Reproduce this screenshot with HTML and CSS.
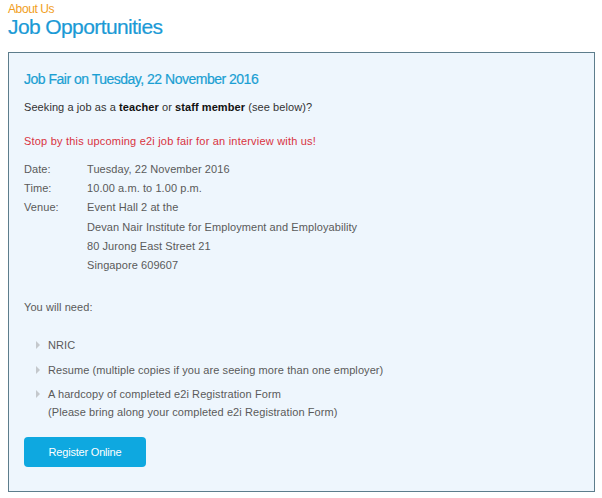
FILE: index.html
```html
<!DOCTYPE html>
<html lang="en">
  <head>
    <meta charset="UTF-8" />
    <meta name="viewport" content="width=device-width, initial-scale=1.0" />
    <title>Job Opportunities</title>
    <link rel="stylesheet" href="styles.css">
  </head>
  <body>
    <div class="page-head">
      <div class="crumb">About Us</div>
      <h1>Job Opportunities</h1>
    </div>

    <!-- Kotak info job fair -->
    <div class="fair-box">
      <h2>Job Fair on Tuesday, 22 November 2016</h2>
      <p class="intro">Seeking a job as a <b>teacher</b> or <b>staff member</b> (see below)?</p>
      <p class="alert">Stop by this upcoming e2i job fair for an interview with us!</p>

      <table class="details">
        <tr><td class="label">Date:</td><td>Tuesday, 22 November 2016</td></tr>
        <tr><td class="label">Time:</td><td>10.00 a.m. to 1.00 p.m.</td></tr>
        <tr>
          <td class="label">Venue:</td>
          <td>
            Event Hall 2 at the<br />
            Devan Nair Institute for Employment and Employability<br />
            80 Jurong East Street 21<br />
            Singapore 609607
          </td>
        </tr>
      </table>

      <p class="need">You will need:</p>
      <ul class="need-list">
        <li>NRIC</li>
        <li>Resume (multiple copies if you are seeing more than one employer)</li>
        <li>A hardcopy of completed e2i Registration Form<br />(Please bring along your completed e2i Registration Form)</li>
      </ul>

      <a class="register-btn" href="#">Register Online</a>
    </div>
  </body>
</html>
```

FILE: styles.css
```css
* {
  margin: 0;
  padding: 0;
  box-sizing: border-box;
}

body {
  font-family: "Liberation Sans", Arial, sans-serif;
  background-color: #fff;
  padding: 3px 8px 0 8px;
  color: #5a5a5a;
  font-size: 11px;
  letter-spacing: 0.08px;
}

.crumb {
  color: #f19e1c;
  font-size: 12px;
  letter-spacing: -0.4px;
  line-height: 13px;
}

h1 {
  color: #1b9ad6;
  font-size: 21px;
  font-weight: normal;
  letter-spacing: -0.6px;
  line-height: 20px;
  margin-top: 1px;
  -webkit-text-stroke: 0.2px #1b9ad6;
}

.fair-box {
  margin-top: 15px;
  width: 587px;
  height: 440px;
  background-color: #eef6fd;
  border: 1px solid #5d7d8c;
  padding: 17px 15px;
}

.fair-box h2 {
  color: #1a9fd3;
  font-size: 14px;
  font-weight: normal;
  letter-spacing: -0.5px;
  line-height: 18px;
  -webkit-text-stroke: 0.2px #1a9fd3;
}

.intro {
  margin-top: 12px;
  line-height: 14px;
  color: #333;
}

.intro b {
  color: #111;
}

.alert {
  margin-top: 20px;
  line-height: 14px;
  color: #d9333f;
  letter-spacing: 0.2px;
}

.details {
  margin-top: 12px;
  border-collapse: collapse;
  line-height: 19.2px;
}

.details td {
  vertical-align: top;
  padding: 0;
}

.details .label {
  width: 63px;
}

.need {
  margin-top: 25px;
  line-height: 14px;
}

.need-list {
  list-style: none;
  margin-top: 22px;
  margin-left: 11px;
}

.need-list li {
  position: relative;
  padding-left: 13px;
  line-height: 18px;
  margin-bottom: 6.5px;
}

/* segitiga kecil abu-abu */
.need-list li::before {
  content: "";
  position: absolute;
  left: 1px;
  top: 5px;
  border-left: 4px solid #c4c8cc;
  border-top: 4px solid transparent;
  border-bottom: 4px solid transparent;
}

.register-btn {
  display: inline-block;
  margin-top: 9px;
  width: 122px;
  height: 30px;
  line-height: 30px;
  text-align: center;
  background-color: #0ea8e0;
  color: #fff;
  border-radius: 4px;
  text-decoration: none;
  font-size: 11px;
  letter-spacing: -0.2px;
}
```
